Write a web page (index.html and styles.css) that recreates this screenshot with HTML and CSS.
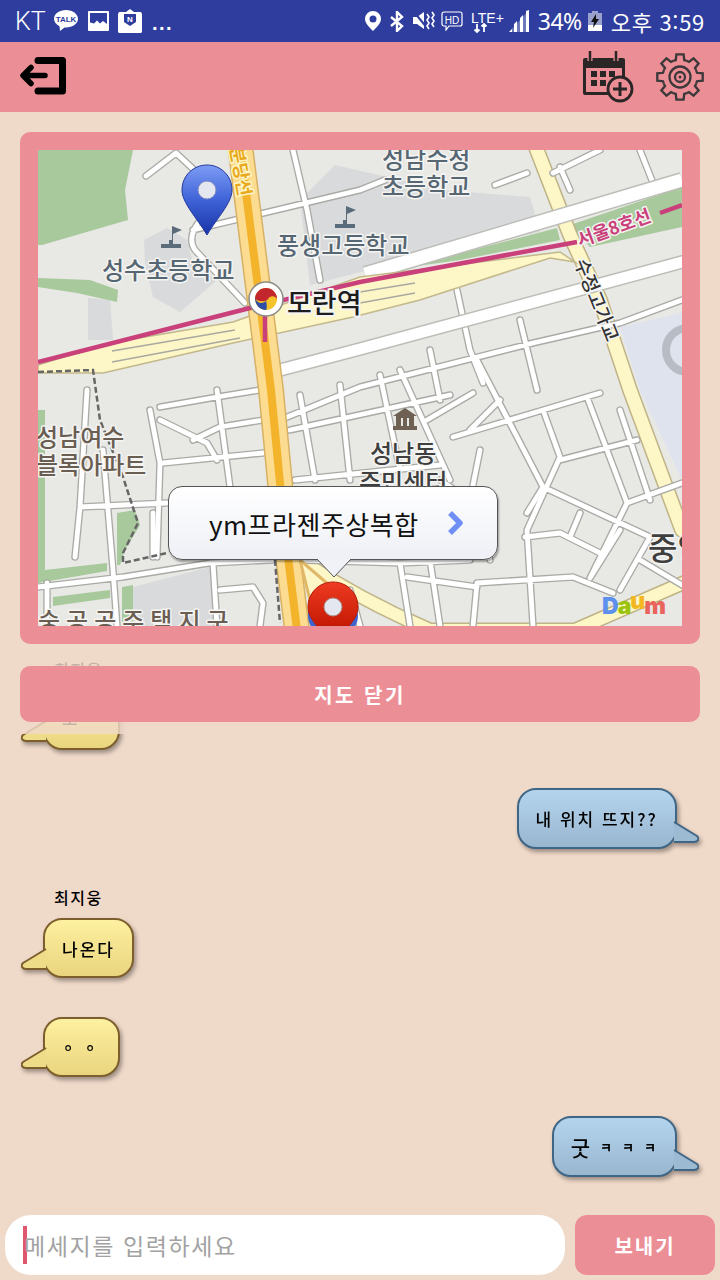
FILE: index.html
```html
<!DOCTYPE html>
<html lang="ko">
<head>
<meta charset="utf-8">
<title>채팅</title>
<link rel="stylesheet" href="styles.css">
</head>
<body>
<div class="screen">

    <div class="status-bar">
        <span class="carrier">KT</span>
        <svg class="st-talk" width="24" height="22" viewBox="0 0 24 22"><path d="M12 0C5.4 0 0 3.900 0 8.800c0 3.200 2.200 5.900 5.500 7.400L6 21l4.500-3.600c.5 0 1 .1 1.500.1 6.600 0 12-3.900 12-8.700S18.600 0 12 0z" fill="#fff"/><text x="12" y="11.700" class="talk-text">TALK</text></svg>
        <svg class="st-image" width="21" height="20" viewBox="0 0 21 20"><path d="M1 0h19a1 1 0 0 1 1 1v18a1 1 0 0 1-1 1H1a1 1 0 0 1-1-1V1a1 1 0 0 1 1-1z" fill="#fff"/><path d="M2 2h17v11l-4-3-3 2.500-3-3-3 3-4-1z" fill="#2f3e9e"/></svg>
        <svg class="st-mail" width="24" height="24" viewBox="0 0 24 24"><path d="M12 0l4 3h7l1 2v18l-1 1H1l-1-1V5l1-2h7z" fill="#fff"/><path d="M6 5h12v8l-6 4-6-4z" fill="#2f3e9e"/><text x="12" y="12.500" class="mail-text">N</text></svg>
        <span class="dots">...</span>
        <span class="status-gap"></span>
        <svg class="st-pin" width="16" height="20" viewBox="0 0 16 20"><path fill-rule="evenodd" d="M8 0a8 8 0 0 1 8 8c0 4-4 8-8 12C4 16 0 12 0 8a8 8 0 0 1 8-8zm0 4.500a3.500 3.500 0 1 0 0 7 3.500 3.500 0 0 0 0-7z" fill="#fff"/></svg>
        <svg class="st-bt" width="14" height="21" viewBox="0 0 14 21"><path d="M1 6l11 9-5 5V1l5 5-11 9" fill="none" stroke="#fff" stroke-width="2.400"/></svg>
        <svg class="st-mute" width="22" height="20" viewBox="0 0 22 20"><path d="M0 6h4l7-5v17l-7-5H0z" fill="#fff"/><path d="M1 1l14 17" stroke="#2f3e9e" stroke-width="2"/><path d="M14 3l2 3-2 3 2 3-2 3 2 3M19 1l2 3-2 3 2 3-2 3 2 3" fill="none" stroke="#fff" stroke-width="1.600"/></svg>
        <svg class="st-hd" width="22" height="20" viewBox="0 0 22 20"><path d="M3 1h16a2 2 0 0 1 2 2v10a2 2 0 0 1-2 2H8l-3 4v-4H3a2 2 0 0 1-2-2V3a2 2 0 0 1 2-2z" fill="none" stroke="#fff" stroke-width="1.200"/><text x="11" y="12.500" class="hd-text">HD</text></svg>
        <svg class="st-lte" width="34" height="24" viewBox="0 0 34 24"><text x="0" y="14" class="lte-text">LTE+</text><path d="M6 15v8M3.500 20.500L6 23l2.500-2.500M13 23v-8M10.500 17.500L13 15l2.500 2.500" fill="none" stroke="#fff" stroke-width="1.800"/></svg>
        <svg class="st-signal" width="20" height="22" viewBox="0 0 20 22"><path d="M0 22l20-22v22z" fill="#fff" opacity=".3"/><path d="M0 22l3-3v3zM5 22v-8l3-3v11zM11 22V8l3-3v17zM17 22V1l3-1v22z" fill="#fff"/></svg>
        <span class="st-text st-pct">34%</span>
        <svg class="st-batt" width="14" height="20" viewBox="0 0 14 20"><path d="M4 0h6v2h4v18H0V2h4z" fill="#9aa0cc"/><path d="M0 14h14v6H0z" fill="#fff"/><path d="M8 3L3 11h3l-1 6 6-9H8z" fill="#111"/></svg>
        <span class="st-text st-clock">오후 3:59</span>
    </div>

    <div class="toolbar">
        <svg class="tb-back" width="50" height="42" viewBox="0 0 50 42"><path d="M20 4.500h24.500V35H20" fill="none" stroke="#000" stroke-width="7" stroke-linecap="round" stroke-linejoin="round"/><path d="M27 19.500H6M13 11.500l-8 8 8 8" fill="none" stroke="#000" stroke-width="5.500" stroke-linecap="round" stroke-linejoin="round"/></svg>
        <span class="tb-gap"></span>
        <svg class="tb-cal" width="52" height="52" viewBox="0 0 52 52"><path d="M3 7h38a2 2 0 0 1 2 2v26H29v9H3a2 2 0 0 1-2-2V9a2 2 0 0 1 2-2z" fill="#2b2626"/><path d="M4 17h36v14H28l-3 10H4z" fill="#ec8e96"/><path d="M8 1v9M34 1v9" stroke="#ec8e96" stroke-width="5"/><path d="M8 0v9M34 0v9" stroke="#2b2626" stroke-width="2.500" stroke-linecap="round"/><path d="M9 20h6v6H9zM18 20h6v6h-6zM27 20h6v6h-6zM9 29h6v6H9zM18 29h6v6h-6z" fill="#2b2626"/><circle cx="38" cy="38" r="12" fill="#ec8e96" stroke="#2b2626" stroke-width="2.800"/><path d="M38 31v14M31 38h14" stroke="#2b2626" stroke-width="3"/></svg>
        <svg class="tb-gear" width="48" height="48" viewBox="-24 -24 48 48">
            <g fill="none" stroke="#3a3838" stroke-width="2.300">
                <path id="gear-tooth" d="M-6.700-16.170L-4.230-16.980L-3.600-22.720H3.600L4.230-16.980L6.700-16.170"/>
                <use href="#gear-tooth" transform="rotate(45)"/>
                <use href="#gear-tooth" transform="rotate(90)"/>
                <use href="#gear-tooth" transform="rotate(135)"/>
                <use href="#gear-tooth" transform="rotate(180)"/>
                <use href="#gear-tooth" transform="rotate(225)"/>
                <use href="#gear-tooth" transform="rotate(270)"/>
                <use href="#gear-tooth" transform="rotate(315)"/>
                <circle r="10.500"/>
                <circle r="5"/>
                <circle r="1.500" fill="#3a3838" stroke="none"/>
            </g>
        </svg>
    </div>

    <div class="chat">
        <div class="sender">최지웅</div>
        <div class="msg msg-in">
            <div class="bubble bubble-in bubble-left">ㅗ</div>
            <svg class="tail tail-in" width="30" height="26" viewBox="0 0 30 26"><path d="M25 3L2 17Q0 19 1 21Q2 23 5 23H25"/></svg>
        </div>
        <div class="msg msg-out msg-first-out">
            <div class="bubble bubble-out">내 위치 뜨지??</div>
            <svg class="tail tail-out" width="30" height="26" viewBox="0 0 30 26"><path d="M5 3L28 17Q30 19 29 21Q28 23 25 23H5"/></svg>
        </div>
        <div class="sender">최지웅</div>
        <div class="msg msg-in">
            <div class="bubble bubble-in">나온다</div>
            <svg class="tail tail-in" width="30" height="26" viewBox="0 0 30 26"><path d="M25 3L2 17Q0 19 1 21Q2 23 5 23H25"/></svg>
        </div>
        <div class="msg msg-in">
            <div class="bubble bubble-in bubble-small">ㅇ ㅇ</div>
            <svg class="tail tail-in" width="30" height="26" viewBox="0 0 30 26"><path d="M25 3L2 17Q0 19 1 21Q2 23 5 23H25"/></svg>
        </div>
        <div class="msg msg-out">
            <div class="bubble bubble-out"><span class="big-char">굿</span><small>ㅋㅋㅋ</small></div>
            <svg class="tail tail-out" width="30" height="26" viewBox="0 0 30 26"><path d="M5 3L28 17Q30 19 29 21Q28 23 25 23H5"/></svg>
        </div>
    </div>

    <!-- map panel lies over the top of the chat list -->
    <div class="map-overlay">
        <div class="map-card">
            <div class="map">
                <svg class="map-svg" width="644" height="476" viewBox="38 150 644 476">
                    <rect x="38" y="150" width="644" height="476" fill="#e8e8e5"/>
                    <!-- areas -->
                    <g fill="#d8dadb">
                        <path d="M144 240L167 228 187 240 193 263 217 280 180 312 153 297 145 263z"/>
                        <path d="M300 200L335 165 443 190 530 197 540 232 443 250 400 262 310 285z"/>
                        <path d="M133 587L210 567 217 626H133z"/>
                        <path d="M88 298L110 300 113 340 88 340z"/>
                    </g>
                    <path d="M620 327L682 313V480L640 390z" fill="#dfe3ee"/>
                    <circle cx="688" cy="350" r="22" fill="none" stroke="#b8bcc4" stroke-width="8"/>
                    <g fill="#a8c99c">
                        <path d="M38 150H133L125 190 128 220 42 245H38z"/>
                        <path d="M38 278L90 280 118 290 117 302 77 293 38 287z"/>
                        <path d="M403 268L557 228 560 240 460 260z"/>
                        <path d="M570 225L682 187V227L590 247z"/>
                        <path d="M38 410H45V570L107 563V571L38 583z"/>
                        <path d="M117 513L135 510 140 525 125 550 120 565H117z"/>
                        <path d="M53 597L110 590V598L53 606z"/>
                        <path d="M122 587L133 585V626H122z"/>
                    </g>
                    <!-- pale roads -->
                    <g fill="none" stroke-linecap="round">
                        <path d="M535 145L570 235 600 300 630 390 682 530" stroke="#bfb487" stroke-width="16"/>
                        <path d="M535 145L570 235 600 300 630 390 682 530" stroke="#fdf6c6" stroke-width="13"/>
                        <path d="M300 560Q360 600 430 630H575L690 580" stroke="#bfb487" stroke-width="15"/>
                        <path d="M300 560Q360 600 430 630H575L690 580" stroke="#fdf6c6" stroke-width="12"/>
                    </g>
                    <!-- small roads, drawn twice for the grey edge -->
                    <g fill="none" stroke-linecap="round" stroke-linejoin="round">
                        <path stroke="#aaaaa6" stroke-width="7.500" d="M146 176L176 153 205 180M205 215Q185 235 195 250L245 303M193 230L360 190 385 180M293 150L307 210 320 280M495 185L527 173M553 173L600 150M560 167L570 190M640 150L653 183M457 290L470 350 483 383M520 320L537 390M280 420L360 387 533 343 620 323 682 300M477 360L543 487 650 537M427 420L473 393M453 437L543 410 600 393M543 410L560 457 527 530 533 626M560 460L637 440M587 397L627 503M627 503L590 578M627 503L682 483M543 487L527 513M525 537L560 533 600 553M580 513L570 537M620 530L590 578M477 583L573 577 613 593M477 583L473 626M470 560L400 563M407 577L477 587M400 563L410 626M87 390L80 507 75 557M150 410L160 463 157 557M217 390L230 487M160 407L217 397 260 390M160 420L207 443 217 460M193 440L220 427 263 420M163 463L263 453M103 450L113 570 117 626M80 507L167 503M38 587L123 577 210 563 273 560M47 583V626M213 563L217 626M220 590L253 587 263 603 260 626M153 513V557M290 430L450 395M295 480L440 465M300 520L470 500 490 560M300 560L400 563M380 375L400 470M340 385L350 480M400 370L450 480M300 395L315 480M430 350L440 400M470 430L500 400M440 480L470 500 480 450M430 560L440 626M350 590L360 626M620 410L650 500M650 537L620 590M640 560L682 585"/>
                        <path stroke="#fff" stroke-width="4.800" d="M146 176L176 153 205 180M205 215Q185 235 195 250L245 303M193 230L360 190 385 180M293 150L307 210 320 280M495 185L527 173M553 173L600 150M560 167L570 190M640 150L653 183M457 290L470 350 483 383M520 320L537 390M280 420L360 387 533 343 620 323 682 300M477 360L543 487 650 537M427 420L473 393M453 437L543 410 600 393M543 410L560 457 527 530 533 626M560 460L637 440M587 397L627 503M627 503L590 578M627 503L682 483M543 487L527 513M525 537L560 533 600 553M580 513L570 537M620 530L590 578M477 583L573 577 613 593M477 583L473 626M470 560L400 563M407 577L477 587M400 563L410 626M87 390L80 507 75 557M150 410L160 463 157 557M217 390L230 487M160 407L217 397 260 390M160 420L207 443 217 460M193 440L220 427 263 420M163 463L263 453M103 450L113 570 117 626M80 507L167 503M38 587L123 577 210 563 273 560M47 583V626M213 563L217 626M220 590L253 587 263 603 260 626M153 513V557M290 430L450 395M295 480L440 465M300 520L470 500 490 560M300 560L400 563M380 375L400 470M340 385L350 480M400 370L450 480M300 395L315 480M430 350L440 400M470 430L500 400M440 480L470 500 480 450M430 560L440 626M350 590L360 626M620 410L650 500M650 537L620 590M640 560L682 585"/>
                        <!-- wide white roads -->
                        <path d="M365 274L682 180" stroke="#bdbdb8" stroke-width="16" stroke-linecap="butt"/>
                        <path d="M365 274L682 180" stroke="#fff" stroke-width="13" stroke-linecap="butt"/>
                        <path d="M280 370L360 349 682 262" stroke="#bdbdb8" stroke-width="14"/>
                        <path d="M280 370L360 349 682 262" stroke="#fff" stroke-width="11"/>
                    </g>
                    <!-- overpass -->
                    <path d="M38 365L110 343 233 322 360 277 560 252 590 272 575 262 550 258 460 287 420 300 353 317 233 343 103 373H38z" fill="#fdf6c6" stroke="#c3b88c" stroke-width="1.500"/>
                    <path d="M112 351L235 330M112 362L240 338M360 292L415 283M360 303L415 293" stroke="#a9a9a2" stroke-width="1.500"/>
                    <!-- main road -->
                    <g fill="none">
                        <path d="M240 145L271 390 280 483 288 557 297 630" stroke="#d8b163" stroke-width="26"/>
                        <path d="M240 145L271 390 280 483 288 557 297 630" stroke="#fbdc91" stroke-width="23"/>
                        <path d="M240 145L271 390 280 483 288 557 297 630" stroke="#f3b42c" stroke-width="8"/>
                    </g>
                    <path d="M300 560L335 590 310 600z" fill="#fdf6c6" stroke="#e0b868" stroke-width="3"/>
                    <!-- subway -->
                    <path d="M38 362L250 308 360 282 577 242M660 213L682 205M265 310V342" fill="none" stroke="#c9407a" stroke-width="4.500"/>
                    <!-- dashed boundary -->
                    <path d="M38 372L93 370 100 420 123 477 138 523 123 553V563L167 553M275 560L280 623" fill="none" stroke="#666" stroke-width="2.500" stroke-dasharray="6 3"/>
                    <!-- flags and building -->
                    <path d="M161 248h20v-4h-8v-10l9-4-10-4v14h-3v4h-8zM335 228h20v-4h-8v-10l9-4-10-4v14h-3v4h-8z" fill="#5a6b7a"/>
                    <path d="M405 408l12 8h-3v10h3v4h-24v-4h3v-10h-3zM401 418v8h2v-8zM407 418v8h2v-8z" fill="#6f6054"/>
                    <!-- labels -->
                    <g class="lb lb-grey">
                        <text x="382" y="168">성남수정</text>
                        <text x="382" y="195">초등학교</text>
                        <text x="277" y="254">풍생고등학교</text>
                        <text x="102" y="279">성수초등학교</text>
                    </g>
                    <g class="lb lb-brown">
                        <text x="36" y="446">성남여수</text>
                        <text x="36" y="474">블록아파트</text>
                        <text x="38" y="630" class="lb-wide">숭공공주택지구</text>
                    </g>
                    <g class="lb lb-dark">
                        <text x="370" y="462">성남동</text>
                        <text x="359" y="491">주민센터</text>
                        <text x="648" y="560" class="lb-big">중앙</text>
                    </g>
                    <text x="287" y="313" class="lb lb-station">모란역</text>
                    <text class="lb lb-line" transform="translate(580 247) rotate(-20)">서울8호선</text>
                    <text class="lb lb-bridge" transform="translate(574 262) rotate(68)">수정고가교</text>
                    <text class="lb lb-subway" transform="translate(230 148) rotate(80)">분당선</text>
                    <!-- station mark -->
                    <circle cx="266" cy="299" r="17" fill="#fff" stroke="#8a8a86" stroke-width="1.500"/>
                    <circle cx="266" cy="299" r="11" fill="#f3c22c"/>
                    <path d="M255 299a11 11 0 0 1 22 0c-3-4-7-3-9 0s-8 3-13 0z" fill="#c4262e"/>
                    <path d="M255 298c2 6 8 6 11 3 1 4 1 8 0 9-6 0-11-5-11-12z" fill="#2d4fa8"/>
                    <!-- daum -->
                    <text x="602" y="614" class="daum"><tspan fill="#5d90ee">D</tspan><tspan fill="#9cc30c">a</tspan><tspan fill="#f3b722" dy="-5">u</tspan><tspan fill="#e8645c" dy="5">m</tspan></text>
                </svg>
                <svg class="pin pin-blue" width="52" height="72" viewBox="0 0 52 72"><defs><linearGradient id="pb" x1="0" y1="0" x2="0" y2="1"><stop offset="0" stop-color="#7e9cf5"/><stop offset=".5" stop-color="#3f63d8"/><stop offset="1" stop-color="#1733a6"/></linearGradient></defs><path d="M26 1C12 1 1 12 1 26c0 13 15 28 25 45 10-17 25-32 25-45C51 12 40 1 26 1z" fill="url(#pb)" stroke="#23399a"/><circle cx="26" cy="26" r="9" fill="#e4e6f0" stroke="#7e8cc0"/></svg>
                <svg class="pin pin-under" width="52" height="45" viewBox="0 0 52 45"><path d="M26 0C12 0 1 11 1 25c0 9 6 14 10 20h30c4-6 10-11 10-20C51 11 40 0 26 0z" fill="#3e63cf"/></svg>
                <svg class="pin pin-red" width="52" height="45" viewBox="0 0 52 45"><defs><linearGradient id="pr" x1="0" y1="0" x2="0" y2="1"><stop offset="0" stop-color="#ee3b22"/><stop offset="1" stop-color="#c61a05"/></linearGradient></defs><path d="M26 1C12 1 1 12 1 26c0 7 4 13 9 19h32c5-6 9-12 9-19C51 12 40 1 26 1z" fill="url(#pr)" stroke="#b01a08"/><circle cx="26" cy="26" r="9" fill="#e4e6f0" stroke="#a8908c"/></svg>
                <div class="callout">
                    <span class="callout-text">ym프라젠주상복합</span>
                    <svg class="callout-arrow" width="16" height="26" viewBox="0 0 16 26"><path d="M3 3l10 10L3 23" fill="none" stroke="#6f8ff5" stroke-width="5.500" stroke-linejoin="round"/></svg>
                    <svg class="callout-tail" width="36" height="20" viewBox="0 0 36 20"><path d="M1 1L18 19 35 1" fill="#f0f2f7" stroke="#555"/></svg>
                </div>
            </div>
        </div>
        <div class="map-close">지도 닫기</div>
    </div>

    <div class="input-bar">
        <div class="input-box"><span class="caret"></span><span class="placeholder">메세지를 입력하세요</span></div>
        <div class="send-btn">보내기</div>
    </div>

</div>
</body>
</html>
```

FILE: styles.css
```css
* {
    box-sizing: border-box;
}

body {
    margin: 0;
    font-family: "Noto Sans CJK KR", "Noto Sans", sans-serif;
}

.screen {
    position: relative;
    width: 720px;
    height: 1280px;
    overflow: hidden;
    display: flex;
    flex-direction: column;
    background-color: #efd9c9;
}

/* status bar */
.status-bar {
    height: 42px;
    flex: none;
    display: flex;
    align-items: center;
    padding-left: 15px;
    background-color: #2f3e9e;
    color: #fff;
}

.status-bar svg {
    flex: none;
}

.carrier {
    font-family: Roboto, sans-serif;
    font-weight: 300;
    font-size: 25px;
    width: 39px;
}

.st-image {
    margin-left: 10px;
}

.st-mail {
    margin-left: 9px;
}

.dots {
    margin-left: 10px;
    font-family: "Liberation Sans", sans-serif;
    font-weight: bold;
    font-size: 20px;
    letter-spacing: 1.5px;
    line-height: 1;
    padding-top: 4px;
}

.status-gap {
    flex: 1;
}

.st-bt {
    margin-left: 9px;
}

.st-mute {
    margin-left: 9px;
}

.st-hd {
    margin-left: 6px;
}

.st-lte {
    margin-left: 8px;
}

.lte-text {
    font-family: "Liberation Sans", sans-serif;
    font-size: 14px;
    fill: #fff;
}

.st-signal {
    margin-left: 4px;
}

.st-text {
    font-size: 24px;
    line-height: 1;
    white-space: nowrap;
}

.st-pct {
    margin-left: 9px;
    font-family: "Noto Sans", sans-serif;
    font-size: 23px;
    letter-spacing: -.5px;
}

.st-batt {
    margin-left: 6px;
}

.st-clock {
    margin-left: 9px;
    margin-right: 15px;
    font-size: 22px;
    letter-spacing: .7px;
}

.talk-text {
    font-family: "Liberation Sans", sans-serif;
    font-weight: bold;
    font-size: 8px;
    text-anchor: middle;
    fill: #2f3e9e;
}

.mail-text {
    font-family: "Liberation Sans", sans-serif;
    font-weight: bold;
    font-size: 8px;
    text-anchor: middle;
    fill: #fff;
}

.hd-text {
    font-family: "Liberation Sans", sans-serif;
    font-size: 10px;
    text-anchor: middle;
    fill: #fff;
}

/* toolbar */
.toolbar {
    height: 70px;
    flex: none;
    display: flex;
    align-items: center;
    padding: 0 16px 0 18px;
    background-color: #ec8e96;
}

.tb-gap {
    flex: 1;
}

.tb-gear {
    margin-left: 22px;
}

/* chat list */
.chat {
    flex: 1;
    min-height: 0;
    display: flex;
    flex-direction: column;
    justify-content: flex-end;
    padding: 0 43px 38px 43px;
    overflow: hidden;
    color: #000;
}

.sender {
    flex: none;
    height: 30px;
    padding-left: 11px;
    margin-top: 39px;
    font-size: 16px;
    font-weight: 500;
    letter-spacing: 1.500px;
    line-height: 18px;
}

.sender + .msg {
    margin-top: 0;
}

.msg {
    position: relative;
    flex: none;
    margin-top: 39px;
    filter: drop-shadow(2px 3px 2px rgba(0, 0, 0, .35));
}

.msg-in {
    align-self: flex-start;
}

.msg-out {
    align-self: flex-end;
}

.msg-first-out {
    margin-top: 38px;
}

.bubble {
    height: 60px;
    min-width: 77px;
    padding: 0 17px;
    display: flex;
    align-items: center;
    justify-content: center;
    border-radius: 19px;
    border: 2px solid;
    font-size: 17px;
    font-weight: 500;
    letter-spacing: 2px;
    white-space: nowrap;
}

.bubble small {
    font-size: 13px;
    font-weight: bold;
    letter-spacing: 10px;
    margin-left: 8px;
    margin-right: -8px;
}

.big-char {
    font-size: 21px;
}

.bubble-small {
    font-size: 10px;
    font-weight: bold;
    letter-spacing: 5px;
}

.bubble-left {
    justify-content: flex-start;
}

.bubble-in {
    border-color: #7d5f2e;
    background: linear-gradient(#fdf0a0, #ead57f);
}

.bubble-out {
    height: 61px;
    border-color: #3f6685;
    background: linear-gradient(#b4d4ed, #99b6cf);
}

.tail {
    position: absolute;
    top: 28px;
}

.tail path {
    stroke-width: 2;
    stroke-linejoin: round;
}

.tail-in {
    left: -22px;
}

.tail-in path {
    fill: #efdc88;
    stroke: #7d5f2e;
}

.tail-out {
    right: -22px;
    top: 31px;
}

.tail-out path {
    fill: #9dbad3;
    stroke: #3f6685;
}

/* map panel */
.map-overlay {
    position: absolute;
    top: 112px;
    left: 0;
    width: 720px;
    height: 622px;
    padding: 20px 20px 0;
    background-color: rgba(239, 217, 201, .82);
}

.map-card {
    height: 512px;
    padding: 18px;
    border-radius: 10px;
    background-color: #ec8e96;
}

.map {
    position: relative;
    width: 644px;
    height: 476px;
    overflow: hidden;
}

.map-svg {
    display: block;
}

.lb {
    font-family: "Noto Sans CJK KR", sans-serif;
    font-weight: 500;
    font-size: 24px;
    paint-order: stroke;
    stroke: #f4f4f2;
    stroke-width: 3px;
    stroke-linejoin: round;
}

.lb-grey {
    fill: #566672;
}

.lb-brown {
    fill: #6a5d52;
}

.lb-wide {
    letter-spacing: 6px;
}

.lb-dark {
    fill: #3f3f3f;
}

.lb-big {
    font-size: 32px;
}

.lb-station {
    font-size: 27px;
    fill: #1c1c1c;
    stroke-width: 4px;
}

.lb-line {
    font-size: 18px;
    font-weight: bold;
    fill: #c9407a;
}

.lb-bridge {
    font-size: 19px;
    fill: #333;
}

.lb-subway {
    font-size: 18px;
    font-weight: bold;
    fill: #eaa91c;
    stroke: #fdf6c6;
}

.daum {
    font-family: "Inter", sans-serif;
    font-weight: 900;
    font-size: 23px;
    letter-spacing: -1px;
}

.pin {
    position: absolute;
    display: block;
}

.pin-blue {
    left: 143px;
    top: 14px;
}

.pin-under {
    left: 269px;
    top: 441px;
}

.pin-red {
    left: 269px;
    top: 431px;
}

.callout {
    position: absolute;
    left: 130px;
    top: 336px;
    width: 330px;
    height: 74px;
    padding: 0 34px 0 40px;
    display: flex;
    align-items: center;
    justify-content: space-between;
    border: 1px solid #555;
    border-radius: 14px;
    background: linear-gradient(#fff, #eef0f6);
    box-shadow: 1px 2px 2px rgba(0, 0, 0, .35);
}

.callout-text {
    font-size: 26px;
    letter-spacing: .5px;
    color: #111;
    white-space: nowrap;
}

.callout-arrow {
    flex: none;
}

.callout-tail {
    position: absolute;
    left: 147px;
    bottom: -19px;
}

.map-close {
    height: 56px;
    margin-top: 22px;
    display: flex;
    align-items: center;
    justify-content: center;
    border-radius: 10px;
    background-color: #ec8e96;
    color: #fff;
    font-size: 20px;
    font-weight: bold;
    letter-spacing: 2.500px;
}

/* input row */
.input-bar {
    height: 65px;
    flex: none;
    display: flex;
    gap: 10px;
    padding: 0 5px 5px;
}

.input-box {
    width: 560px;
    height: 60px;
    display: flex;
    align-items: center;
    padding-left: 18px;
    border-radius: 26px;
    background-color: #fff;
}

.caret {
    width: 4px;
    height: 38px;
    flex: none;
    background-color: #e0566c;
}

.placeholder {
    margin-left: -3px;
    font-size: 23px;
    color: #a2a2a2;
    letter-spacing: 1.600px;
}

.send-btn {
    width: 140px;
    height: 60px;
    display: flex;
    align-items: center;
    justify-content: center;
    border-radius: 12px;
    background-color: #ec8e96;
    color: #fff;
    font-size: 20px;
    font-weight: bold;
    letter-spacing: 2px;
}
```
